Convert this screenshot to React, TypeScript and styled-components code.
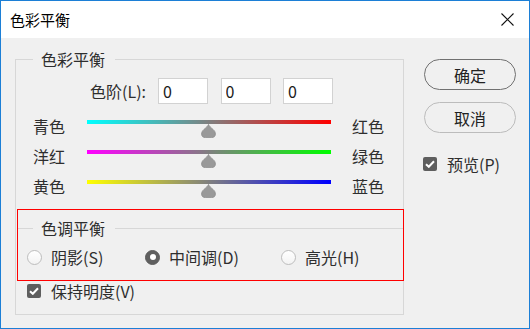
import React from "react";
import styled, { createGlobalStyle } from "styled-components";

const Global = createGlobalStyle`
  html, body { margin: 0; padding: 0; background: #ffffff; }
  body { font-family: "Noto Sans CJK SC", "Microsoft YaHei", sans-serif; }
  * { box-sizing: border-box; }
`;

const Window = styled.div`
  width: 530px;
  height: 329px;
  border: 1px solid #1c7fd6;
  background: #f0f0f0;
  display: flex;
  flex-direction: column;
  color: #2e2e2e;
  font-size: 16px;
  line-height: 20px;
`;

const TitleBar = styled.div`
  height: 37px;
  flex: none;
  background: #ffffff;
  display: flex;
  align-items: center;
  justify-content: space-between;
  padding: 0 15px 0 9px;
`;

const Title = styled.span`
  font-size: 15px;
  color: #000;
`;

const Body = styled.div`
  flex: 1;
  display: flex;
  align-items: flex-start;
  padding: 11px 0 0 14px;
`;

const Group = styled.fieldset`
  margin: 0;
  min-width: 0;
  width: 389px;
  padding: 0 0 13px 0;
  border: 1px solid #d7d7d7;
`;

const Legend = styled.legend<{ $offset: number }>`
  margin-left: ${(p) => p.$offset}px;
  padding: 0 10px 0 8px;
  font-size: 16px;
  line-height: 20px;
  color: #2e2e2e;
`;

const LevelsRow = styled.div`
  display: flex;
  align-items: center;
  margin-top: 9px;
  height: 26px;
`;

const LevelsLabel = styled.label`
  width: 130px;
  text-align: right;
  margin-right: 12px;
`;

const Inputs = styled.div`
  display: flex;
  gap: 12.5px;
`;

const NumberBox = styled.input`
  width: 50px;
  height: 26px;
  border: 1px solid #d2d2d2;
  background: #fff;
  padding: 0 0 0 4px;
  font-family: inherit;
  font-size: 16px;
  color: #1a1a1a;
  outline: none;
`;

const Sliders = styled.div`
  margin-top: 12px;
  padding-left: 17px;
  display: flex;
  flex-direction: column;
`;

const SliderRow = styled.div`
  display: grid;
  grid-template-columns: 54px 244px 1fr;
  height: 30px;
  align-items: start;
`;

const SideLabel = styled.span<{ $right?: boolean }>`
  padding-left: ${(p) => (p.$right ? 21 : 0)}px;
  white-space: nowrap;
`;

const TrackArea = styled.div`
  padding-top: 4px;
  display: flex;
  flex-direction: column;
  align-items: center;
`;

const Track = styled.div<{ $from: string; $to: string }>`
  width: 100%;
  height: 4px;
  background: linear-gradient(to right, ${(p) => p.$from}, ${(p) => p.$to});
`;

const ThumbSvg = styled.svg`
  display: block;
  margin-left: -1px;
`;

const Highlight = styled.div`
  margin: 3px -1px 0 1px;
  border: 1px solid #ff0000;
`;

const InnerGroup = styled.fieldset`
  margin: 8px 0 0 0;
  min-width: 0;
  padding: 9px 0 13px 0;
  border-style: solid;
  border-color: #d7d7d7;
  border-width: 1px 0 0 0;
`;

const RadioRow = styled.div`
  display: grid;
  grid-template-columns: 118px 136px auto;
  padding-left: 9px;
  height: 20px;
  align-items: center;
`;

const Option = styled.label`
  display: flex;
  align-items: center;
  gap: 9px;
  white-space: nowrap;
`;

const RadioDot = styled.span<{ $on?: boolean }>`
  width: 15px;
  height: 15px;
  border-radius: 50%;
  flex: none;
  display: flex;
  align-items: center;
  justify-content: center;
  border: 1px solid ${(p) => (p.$on ? "#5c5c5c" : "#bdbdbd")};
  background: ${(p) => (p.$on ? "#5f5f5f" : "linear-gradient(#ffffff, #f3f3f3)")};
  &::after {
    content: "";
    width: 6px;
    height: 6px;
    border-radius: 50%;
    background: ${(p) => (p.$on ? "#ffffff" : "transparent")};
  }
`;

const CheckRow = styled.label<{ $pad: number }>`
  display: flex;
  align-items: center;
  gap: 10px;
  height: 20px;
  padding-left: ${(p) => p.$pad}px;
  white-space: nowrap;
`;

const CheckBox = styled.span`
  width: 14px;
  height: 14px;
  flex: none;
  border-radius: 2px;
  background: #5e5e5e;
  display: flex;
  align-items: center;
  justify-content: center;
`;

const Side = styled.div`
  margin-left: 20px;
  padding-top: 10px;
  display: flex;
  flex-direction: column;
`;

const Button = styled.button<{ $default?: boolean }>`
  width: 92px;
  height: 31px;
  margin-bottom: 12px;
  border-radius: 15.5px;
  border: 1px solid ${(p) => (p.$default ? "#707070" : "#bcbcbc")};
  background: #f0f0f0;
  font-family: inherit;
  font-size: 16px;
  color: #222;
  padding: 0;
  line-height: 20px;
`;

const PreviewRow = styled(CheckRow)`
  margin-top: 9px;
  margin-left: -1px;
`;

const Thumb = () => (
  <ThumbSvg width="15" height="14" viewBox="0 0 15 14">
    <path
      d="M7.5 0.4 C8.3 2.4 10 3.7 12 5.4 C13.8 6.9 14.4 8.5 14.4 10.1 C14.4 12.6 12.6 13.6 10.5 13.6 L4.5 13.6 C2.4 13.6 0.6 12.6 0.6 10.1 C0.6 8.5 1.2 6.9 3 5.4 C5 3.7 6.7 2.4 7.5 0.4 Z"
      fill="#999999"
      stroke="#8a8a8a"
      strokeWidth="0.8"
    />
  </ThumbSvg>
);

const Check = () => (
  <svg width="10" height="8" viewBox="0 0 10 8">
    <path d="M1 4.2 L3.8 6.8 L9 1.2" fill="none" stroke="#fff" strokeWidth="2" />
  </svg>
);

const sliders = [
  { l: "青色", r: "红色", from: "#00ffff", to: "#ff0000" },
  { l: "洋红", r: "绿色", from: "#ff00ff", to: "#00ff00" },
  { l: "黄色", r: "蓝色", from: "#ffff00", to: "#0000ff" },
];

export default function App() {
  return (
    <>
      <Global />
      <Window>
        <TitleBar>
          <Title>色彩平衡</Title>
          <svg width="13" height="13" viewBox="0 0 13 13">
            <path d="M0.5 0.5 L12.5 12.5 M12.5 0.5 L0.5 12.5" stroke="#111" strokeWidth="1.1" />
          </svg>
        </TitleBar>
        <Body>
          <Group>
            <Legend $offset={17}>色彩平衡</Legend>
            <LevelsRow>
              <LevelsLabel>色阶(L):</LevelsLabel>
              <Inputs>
                <NumberBox defaultValue="0" />
                <NumberBox defaultValue="0" />
                <NumberBox defaultValue="0" />
              </Inputs>
            </LevelsRow>
            <Sliders>
              {sliders.map((s) => (
                <SliderRow key={s.l}>
                  <SideLabel>{s.l}</SideLabel>
                  <TrackArea>
                    <Track $from={s.from} $to={s.to} />
                    <Thumb />
                  </TrackArea>
                  <SideLabel $right>{s.r}</SideLabel>
                </SliderRow>
              ))}
            </Sliders>
            <Highlight>
              <InnerGroup>
                <Legend $offset={15}>色调平衡</Legend>
                <RadioRow>
                  <Option>
                    <RadioDot />
                    阴影(S)
                  </Option>
                  <Option>
                    <RadioDot $on />
                    中间调(D)
                  </Option>
                  <Option>
                    <RadioDot />
                    高光(H)
                  </Option>
                </RadioRow>
              </InnerGroup>
            </Highlight>
            <CheckRow $pad={11}>
              <CheckBox>
                <Check />
              </CheckBox>
              保持明度(V)
            </CheckRow>
          </Group>
          <Side>
            <Button $default>确定</Button>
            <Button>取消</Button>
            <PreviewRow $pad={0}>
              <CheckBox>
                <Check />
              </CheckBox>
              预览(P)
            </PreviewRow>
          </Side>
        </Body>
      </Window>
    </>
  );
}
